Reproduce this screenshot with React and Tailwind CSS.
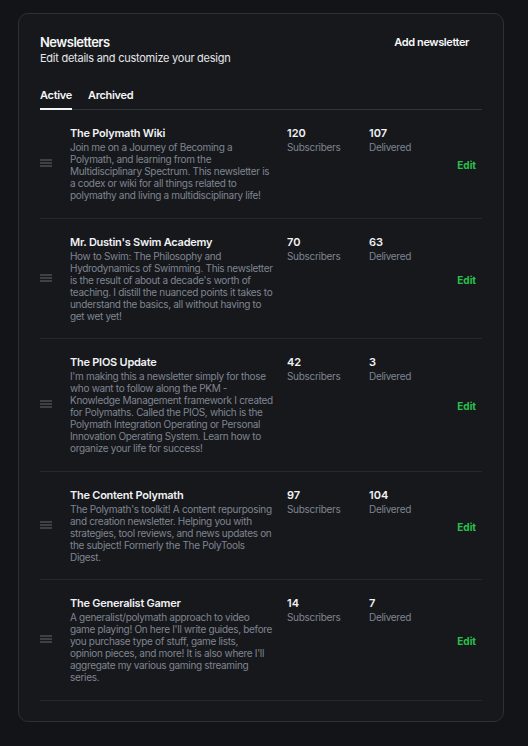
const newsletters = [
  {
    title: 'The Polymath Wiki',
    description:
      'Join me on a Journey of Becoming a Polymath, and learning from the Multidisciplinary Spectrum. This newsletter is a codex or wiki for all things related to polymathy and living a multidisciplinary life!',
    subscribers: 120,
    delivered: 107,
  },
  {
    title: "Mr. Dustin's Swim Academy",
    description:
      "How to Swim: The Philosophy and Hydrodynamics of Swimming. This newsletter is the result of about a decade's worth of teaching. I distill the nuanced points it takes to understand the basics, all without having to get wet yet!",
    subscribers: 70,
    delivered: 63,
  },
  {
    title: 'The PIOS Update',
    description:
      "I'm making this a newsletter simply for those who want to follow along the PKM - Knowledge Management framework I created for Polymaths. Called the PIOS, which is the Polymath Integration Operating or Personal Innovation Operating System. Learn how to organize your life for success!",
    subscribers: 42,
    delivered: 3,
  },
  {
    title: 'The Content Polymath',
    description:
      "The Polymath's toolkit! A content repurposing and creation newsletter. Helping you with strategies, tool reviews, and news updates on the subject! Formerly the The PolyTools Digest.",
    subscribers: 97,
    delivered: 104,
  },
  {
    title: 'The Generalist Gamer',
    description:
      "A generalist/polymath approach to video game playing! On here I'll write guides, before you purchase type of stuff, game lists, opinion pieces, and more! It is also where I'll aggregate my various gaming streaming series.",
    subscribers: 14,
    delivered: 7,
  },
];

function DragHandle() {
  return (
    <svg width="12" height="8" viewBox="0 0 12 8" fill="none">
      <path d="M0 1h12M0 4h12M0 7h12" stroke="#4a4d55" strokeWidth="1.4" />
    </svg>
  );
}

function NewsletterRow({ item }) {
  return (
    <div className="flex items-center border-b border-[#26282d] pt-[15px] pb-[16.6px]">
      {/* handle */}
      <div className="w-[30px] flex items-center">
        <DragHandle />
      </div>

      {/* title + description */}
      <div className="w-[203px] mr-[14px] self-start">
        <div className="text-[11px] leading-4 font-semibold tracking-[-0.25px] text-[#f1f2f4]">{item.title}</div>
        <p className="text-[10px] leading-[12px] tracking-[-0.32px] text-[#7e8591]">{item.description}</p>
      </div>

      {/* stats */}
      <div className="w-[82px] self-start">
        <div className="text-[11px] leading-4 font-semibold text-[#f1f2f4]">{item.subscribers}</div>
        <div className="text-[10px] leading-[12px] tracking-[-0.3px] text-[#7e8591]">Subscribers</div>
      </div>
      <div className="w-[82px] self-start">
        <div className="text-[11px] leading-4 font-semibold text-[#f1f2f4]">{item.delivered}</div>
        <div className="text-[10px] leading-[12px] tracking-[-0.3px] text-[#7e8591]">Delivered</div>
      </div>

      <div className="flex-1 text-right pr-[6px]">
        <button className="text-[10px] leading-4 font-bold text-[#27c24c]">Edit</button>
      </div>
    </div>
  );
}

export default function App() {
  return (
    <div
      className="min-h-screen bg-[#131418] pt-[13px] pl-[18px] pb-6"
      style={{ fontFamily: 'Inter, "Noto Sans", sans-serif' }}
    >
      <div className="w-[486px] h-[709px] rounded-[10px] border border-[#2e3035] bg-[#17181c] px-[21px] pt-5">
        {/* header */}
        <div className="flex items-start justify-between">
          <div>
            <h1 className="text-[13px] leading-4 font-semibold tracking-[-0.5px] text-[#f5f6f7]">Newsletters</h1>
            <p className="text-[11px] leading-4 tracking-[-0.25px] text-[#e4e6ea]">Edit details and customize your design</p>
          </div>
          <button className="px-[13px] text-[11px] leading-4 font-semibold tracking-[-0.4px] text-[#f5f6f7]">
            Add newsletter
          </button>
        </div>

        {/* tabs */}
        <div className="mt-[21px] flex gap-4 border-b border-[#33353a]">
          <button className="-mb-px border-b-2 border-[#f5f6f7] pb-[5px] text-[11px] leading-4 font-semibold tracking-[-0.3px] text-[#f5f6f7]">
            Active
          </button>
          <button className="-mb-px border-b-2 border-transparent pb-[5px] text-[11px] leading-4 font-semibold tracking-[-0.3px] text-[#f5f6f7]">
            Archived
          </button>
        </div>

        {/* list */}
        <div>
          {newsletters.map((item) => (
            <NewsletterRow key={item.title} item={item} />
          ))}
        </div>
      </div>
    </div>
  );
}
